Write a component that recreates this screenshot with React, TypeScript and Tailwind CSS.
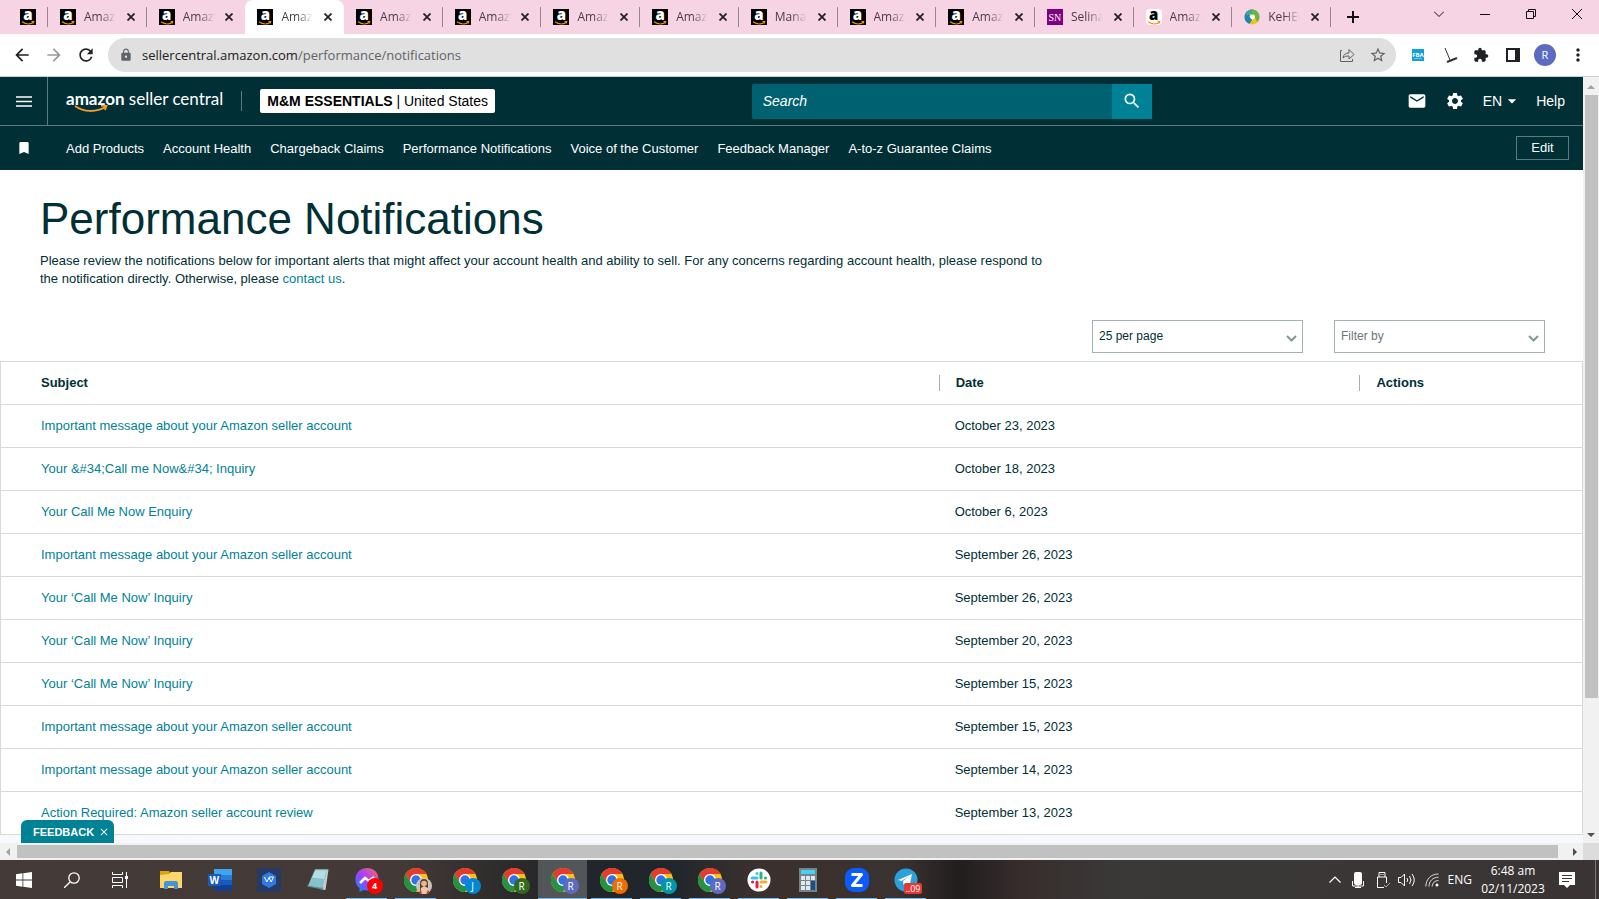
import { ReactNode } from 'react';
import { MdEmail, MdSettings, MdSearch, MdBookmark, MdArrowDropDown, MdLock, MdExtension, MdMoreVert, MdStarBorder, MdArrowBack, MdArrowForward, MdRefresh, MdClose } from 'react-icons/md';

type TabInfo = { title: string; icon: 'amazon' | 'amazonLight' | 'sn' | 'kehe'; active?: boolean };

const tabs: TabInfo[] = [
    { title: 'Amazo', icon: 'amazon' },
    { title: 'Amazo', icon: 'amazon' },
    { title: 'Amazo', icon: 'amazon', active: true },
    { title: 'Amazo', icon: 'amazon' },
    { title: 'Amazo', icon: 'amazon' },
    { title: 'Amazo', icon: 'amazon' },
    { title: 'Amazo', icon: 'amazon' },
    { title: 'Manag', icon: 'amazon' },
    { title: 'Amazo', icon: 'amazon' },
    { title: 'Amazo', icon: 'amazon' },
    { title: 'Selina', icon: 'sn' },
    { title: 'Amazo', icon: 'amazonLight' },
    { title: 'KeHEC', icon: 'kehe' },
];

const navLinks = [
    'Add Products',
    'Account Health',
    'Chargeback Claims',
    'Performance Notifications',
    'Voice of the Customer',
    'Feedback Manager',
    'A-to-z Guarantee Claims',
];

const notifications = [
    { subject: 'Important message about your Amazon seller account', date: 'October 23, 2023' },
    { subject: 'Your &#34;Call me Now&#34; Inquiry', date: 'October 18, 2023' },
    { subject: 'Your Call Me Now Enquiry', date: 'October 6, 2023' },
    { subject: 'Important message about your Amazon seller account', date: 'September 26, 2023' },
    { subject: 'Your ‘Call Me Now’ Inquiry', date: 'September 26, 2023' },
    { subject: 'Your ‘Call Me Now’ Inquiry', date: 'September 20, 2023' },
    { subject: 'Your ‘Call Me Now’ Inquiry', date: 'September 15, 2023' },
    { subject: 'Important message about your Amazon seller account', date: 'September 15, 2023' },
    { subject: 'Important message about your Amazon seller account', date: 'September 14, 2023' },
    { subject: 'Action Required: Amazon seller account review', date: 'September 13, 2023' },
];

function Favicon({ kind }: { kind: TabInfo['icon'] }) {
    if (kind === 'sn') {
        return (
            <span className="flex size-4 shrink-0 items-center justify-center bg-[#80007f] font-['Liberation_Serif',serif] text-[10px] text-white">SN</span>
        );
    }
    if (kind === 'kehe') {
        return (
            <svg className="size-4 shrink-0" viewBox="0 0 16 16">
                <circle cx="8" cy="8" r="7.500" fill="#f3c318" />
                <path fill="#67b346" d="M3 2.500C7-1.500 15.500.5 15.500 8c0 2-1 4-2.500 5-.5-3-3-6-6-7z" />
                <path fill="#1d84b5" d="M.5 8c0-3 1.500-5 3.500-6.200C5 5 7 9 8 11c-1 2-2 3.500-3 3.800C2 13.500.5 11 .5 8z" />
                <path fill="#3aa6a0" d="M2 4C3 1.500 6 .3 9 .6L7 4 3 7z" />
                <path fill="#fff" d="M5.500 7.500c1-2 3.500-2.500 5-1.500 1 1.500.5 3.500-1.500 4.500-2 0-3-1.500-3.500-3z" />
            </svg>
        );
    }
    const light = kind === 'amazonLight';
    return (
        <span className={`relative flex size-4 shrink-0 justify-center ${light ? 'rounded-sm bg-white text-black' : 'bg-black text-white'}`}>
            <span className="font-['Open_Sans',sans-serif] text-[15px] leading-[11px] font-extrabold">a</span>
            <svg className="absolute inset-x-0 bottom-0 h-1 w-4" viewBox="0 0 16 4" fill="none" stroke="#f79400" strokeWidth="1.200">
                <path d="M2 .8c4 2.800 8 2.800 11.500.4M11.500.5h2.200l-.5 1.800" />
            </svg>
        </span>
    );
}

function Tab({ tab, divider }: { tab: TabInfo; divider: boolean }) {
    return (
        <div className={`relative flex h-[34px] min-w-0 flex-1 items-center pl-3 ${tab.active ? 'rounded-t-lg bg-white' : ''}`}>
            <Favicon kind={tab.icon} />
            <span className="ml-2 w-8 overflow-hidden bg-gradient-to-r from-[#45393f] from-50% to-transparent bg-clip-text text-xs whitespace-nowrap text-transparent">{tab.title}</span>
            <button aria-label="Close tab" className="mr-2 ml-auto flex size-4 items-center justify-center text-[#222]">
                <svg className="size-2" viewBox="0 0 8 8" stroke="currentColor" strokeWidth="1.800"><path d="M.5.5l7 7M7.500.5l-7 7" /></svg>
            </button>
            {divider && <span className="absolute top-[7px] right-0 h-5 w-px bg-[#9a858e]" />}
        </div>
    );
}

function Browser() {
    return (
        <header className="shrink-0 font-['Open_Sans','Noto_Sans',sans-serif]">
            <div className="flex h-[34px] bg-[#f6d4e3]">
                <div className="relative flex w-12 shrink-0 items-center pl-5">
                    <Favicon kind="amazon" />
                    <span className="absolute top-[7px] right-0 h-5 w-px bg-[#9a858e]" />
                </div>
                <div className="flex min-w-0 flex-1">
                    {tabs.map((tab, i) => (
                        <Tab key={i} tab={tab} divider={!tab.active && !tabs[i + 1]?.active} />
                    ))}
                </div>
                <div className="flex w-[268px] shrink-0 items-center text-[#111]">
                    <button aria-label="New tab" className="ml-4"><svg className="size-3" viewBox="0 0 12 12" stroke="currentColor" strokeWidth="2"><path d="M6 0v12M0 6h12" /></svg></button>
                    <div className="ml-auto flex h-7 items-center gap-9 self-start pr-[17px]">
                        <button aria-label="Search tabs"><svg className="size-[10px]" viewBox="0 0 10 10" fill="none" stroke="currentColor"><path d="M0 2.500l5 5 5-5" /></svg></button>
                        <button aria-label="Minimize"><svg className="size-[10px]" viewBox="0 0 10 10" stroke="currentColor"><path d="M0 5.500h10" /></svg></button>
                        <button aria-label="Restore"><svg className="size-[10px]" viewBox="0 0 10 10" fill="none" stroke="currentColor"><path d="M.5 2.500h7v7h-7zM2.500 2.500v-2h7v7h-2" /></svg></button>
                        <button aria-label="Close"><svg className="size-[10px]" viewBox="0 0 10 10" stroke="currentColor"><path d="M0 0l10 10M10 0L0 10" /></svg></button>
                    </div>
                </div>
            </div>
            <div className="flex h-[43px] items-center border-b border-[#c9cfcf] bg-white text-[#1f2124]">
                <div className="flex w-[108px] shrink-0 items-center gap-3 pl-3">
                    <button aria-label="Back"><MdArrowBack className="size-5" /></button>
                    <button aria-label="Forward" className="text-[#9a9a9a]"><MdArrowForward className="size-5" /></button>
                    <button aria-label="Reload"><MdRefresh className="size-5" /></button>
                </div>
                <div className="flex h-[34px] min-w-0 flex-1 items-center rounded-full bg-[#e0e0e0] pr-[9px] pl-[11px] text-[#5f6368]">
                    <MdLock className="size-[14px]" />
                    <div className="ml-[9px] flex-1 pt-px text-[13px]"><span className="text-[#202124]">sellercentral.amazon.com</span>/performance/notifications</div>
                    <button aria-label="Share" className="mr-[14px]">
                        <svg className="size-4" viewBox="0 0 16 16" fill="none" stroke="currentColor"><path d="M3 3.500H1.500v11h12V12M4 11c.5-3.500 2.500-5 6-5V2.500l5 5-5 4.500V9C7 9 5.500 9.500 4 11z" /></svg>
                    </button>
                    <button aria-label="Bookmark"><MdStarBorder className="size-[18px]" /></button>
                </div>
                <div className="flex w-[203px] shrink-0 items-center pl-4">
                    <svg className="size-3" viewBox="0 0 12 12"><path fill="#139fda" d="M0 0h12v12H0z" /><text x="6" y="7.500" fontSize="6" fontWeight="bold" textAnchor="middle" fill="#fff">FBA</text><path d="M2 9.500h8" stroke="#8fd3f0" strokeWidth=".7" /></svg>
                    <svg className="ml-[18px] size-4" viewBox="0 0 16 16" fill="none" stroke="#333"><path d="M3 1l5 12" /><path d="M5 15l10-4" strokeWidth="2" /></svg>
                    <MdExtension className="ml-[15px] size-4" />
                    <svg className="ml-[17px] size-[14px]" viewBox="0 0 14 14"><path fill="currentColor" fillRule="evenodd" d="M0 0h14v14H0zM2 2v10h7V2z" /></svg>
                    <span className="ml-[14px] flex size-[22px] items-center justify-center rounded-full bg-[#5c6bc0] text-[11px] text-white">R</span>
                    <button aria-label="Menu" className="ml-3"><MdMoreVert className="size-5" /></button>
                </div>
            </div>
        </header>
    );
}

function SiteHeader() {
    return (
        <div className="bg-[#002f36] text-white">
            <div className="flex h-[49px] items-center border-b border-[#5b7b7f]">
                <button aria-label="Open menu" className="flex h-full w-12 shrink-0 items-center justify-center border-r border-[#5b7b7f]">
                    <svg className="h-[11px] w-4" viewBox="0 0 16 11" stroke="currentColor" strokeWidth="1.500"><path d="M0 1h16M0 5.500h16M0 10h16" /></svg>
                </button>
                <a href="#" className="relative ml-[18px] pb-1 font-['Lato','Open_Sans',sans-serif] text-[17px] leading-6 whitespace-nowrap">
                    <span className="font-bold">amazon</span> seller central
                    <svg className="absolute top-[18px] left-2 h-2 w-9" viewBox="0 0 36 8" fill="none" stroke="#f39a2d" strokeWidth="1.800"><path d="M1 1c9 6.500 21 6.500 31 .8M27 .9h5.500L31 5" /></svg>
                </a>
                <span className="ml-[18px] h-5 w-px bg-[#5b7b7f]" />
                <button className="ml-[18px] h-6 shrink-0 rounded-xs bg-white px-[7px] text-sm leading-6 whitespace-nowrap text-black">
                    <b>M&amp;M ESSENTIALS</b> | United States
                </button>
                <form className="ml-auto flex h-[35px] w-[400px]">
                    <input aria-label="Search" placeholder="Search" className="min-w-0 flex-1 rounded-l-xs bg-[#006170] px-[11px] text-sm italic outline-none placeholder:text-white" />
                    <button type="button" aria-label="Submit search" className="flex w-10 items-center justify-center bg-[#008296]"><MdSearch className="size-5" /></button>
                </form>
                <div className="ml-[255px] flex items-center pr-[18px] text-sm">
                    <a href="#" aria-label="Messages"><MdEmail className="size-5" /></a>
                    <a href="#" aria-label="Settings" className="ml-[18px]"><MdSettings className="size-5" /></a>
                    <button className="ml-[18px] flex items-center">EN<MdArrowDropDown className="size-5" /></button>
                    <a href="#" className="ml-[14px]">Help</a>
                </div>
            </div>
            <nav className="flex h-11 items-center text-[13px]">
                <MdBookmark className="mx-4 size-4" />
                <div className="ml-[18px] flex gap-[19px] pt-[2px] whitespace-nowrap">
                    {navLinks.map((link) => <a key={link} href="#">{link}</a>)}
                </div>
                <button className="mr-[14px] ml-auto h-6 w-[53px] border border-[#5b7b7f]">Edit</button>
            </nav>
        </div>
    );
}

function Dropdown({ label, text, color }: { label: string; text: string; color: string }) {
    return (
        <div className="relative w-[211px]">
            <select aria-label={label} className={`h-[33px] w-full appearance-none border border-[#a2b1b1] bg-white px-[6px] pb-[2px] text-xs ${color}`}>
                <option>{text}</option>
            </select>
            <svg className="pointer-events-none absolute top-[15px] right-[6px] h-[7px] w-[11px]" viewBox="0 0 11 7" fill="none" stroke="#879596" strokeWidth="2"><path d="M1 1l4.500 4.500L10 1" /></svg>
        </div>
    );
}

function Notifications() {
    return (
        <main className="bg-white text-[13px] text-[#002f36]">
            <div className="px-10 pt-6">
                <h1 className="text-[44px] leading-[50px]">Performance Notifications</h1>
                <p className="mt-2 max-w-[1015px] leading-[18px]">
                    Please review the notifications below for important alerts that might affect your account health and ability to sell. For any concerns regarding account health, please respond to the notification directly. Otherwise, please{' '}
                    <a href="#" className="text-[#008296]">contact us</a>.
                </p>
            </div>
            <div className="mt-8 flex justify-end gap-[31px] pr-[38px] pb-2">
                <Dropdown label="Rows per page" text="25 per page" color="text-[#002f36]" />
                <Dropdown label="Filter by" text="Filter by" color="text-[#6c7778]" />
            </div>
            <table className="w-full table-fixed border-collapse border border-[#d5dbdb] text-left">
                <thead>
                    <tr className="h-[43px] border-b border-[#d5dbdb]">
                        <th className="w-[59.300%] pl-10 font-bold">Subject</th>
                        <th className="w-[26.600%]"><div className="border-l border-[#a2b1b1] pl-4 leading-4">Date</div></th>
                        <th><div className="border-l border-[#a2b1b1] pl-4 leading-4">Actions</div></th>
                    </tr>
                </thead>
                <tbody>
                    {notifications.map((n, i) => (
                        <tr key={i} className="h-[43px] border-b border-[#d5dbdb]">
                            <td className="pl-10"><a href="#" className="text-[#008296]">{n.subject}</a></td>
                            <td className="pl-4">{n.date}</td>
                            <td />
                        </tr>
                    ))}
                </tbody>
            </table>
        </main>
    );
}

function Arrow({ d, className }: { d: string; className: string }) {
    return <svg className={`size-2 shrink-0 ${className}`} viewBox="0 0 8 8" fill="currentColor"><path d={d} /></svg>;
}

function ChromeIcon({ children }: { children?: ReactNode }) {
    return (
        <span className="relative size-6">
            <svg className="size-6" viewBox="0 0 24 24">
                <circle cx="12" cy="12" r="12" fill="#fbc116" />
                <path d="M12 6h10.400A12 12 0 0 0 1.600 6l5.200 9z" fill="#e33b2e" />
                <path d="M1.600 6A12 12 0 0 0 12 24l5.200-9L6.800 15z" fill="#229342" />
                <circle cx="12" cy="12" r="6" fill="#fff" />
                <circle cx="12" cy="12" r="4.700" fill="#2f73e8" />
            </svg>
            {children}
        </span>
    );
}

function Badge({ letter, color }: { letter: string; color: string }) {
    return <span className={`absolute -right-1 -bottom-0.5 flex size-4 items-center justify-center rounded-full text-[10px] leading-none text-white ${color}`}>{letter}</span>;
}

function TaskItem({ children, open, active, narrow, label }: { children: ReactNode; open?: boolean; active?: boolean; narrow?: boolean; label: string }) {
    return (
        <button aria-label={label} className={`relative flex shrink-0 items-center justify-center ${narrow ? 'w-12' : 'w-[49px]'} ${active ? 'bg-[#525659]' : ''}`}>
            {children}
            {open && <span className={`absolute bottom-0 h-px bg-[#76b9ed] ${active ? 'inset-x-0' : 'inset-x-1'}`} />}
        </button>
    );
}

function Taskbar() {
    return (
        <footer className="flex h-[39px] shrink-0 bg-[linear-gradient(90deg,#443b39_0%,#433a38_25%,#2c2a2b_32%,#20262b_37%,#20262b_42%,#3a302e_47%,#3b3331_56%,#221e1e_60%,#382d2d_64%,#3a3938_70%,#3a3434_100%)] font-['Open_Sans','Noto_Sans',sans-serif] text-white">
            <div className="flex">
                <TaskItem narrow label="Start"><svg className="size-4" viewBox="0 0 16 16" fill="#fff"><path d="M0 2.200l6.500-.9v6.300H0zM7.300 1.200L16 0v7.600H7.300zM0 8.400h6.500v6.300L0 13.800zM7.300 8.400H16V16l-8.700-1.200z" /></svg></TaskItem>
                <TaskItem narrow label="Search"><svg className="size-4" viewBox="0 0 16 16" fill="none" stroke="#fff" strokeWidth="1.300"><circle cx="10" cy="6" r="5.200" /><path d="M6.300 9.700L0 16" /></svg></TaskItem>
                <TaskItem narrow label="Task view"><svg className="size-4" viewBox="0 0 16 16" fill="none" stroke="#fff"><path d="M.5 0v2.500h10V0M.5 5.500h10v5H.5zM.5 16v-2.500h10V16M14.500 0v16" /><path d="M13 5.500h3" strokeWidth="3" /></svg></TaskItem>
            </div>
            <div className="ml-[2px] flex">
                <TaskItem label="File Explorer">
                    <svg className="h-[18px] w-[22px]" viewBox="0 0 22 18"><path fill="#e0a010" d="M0 0h9l1 2v3H0z" /><path fill="#ffd667" d="M0 4l9-1 2-2h11v16H0z" /><path fill="#4295d8" d="M4 18v-6q0-2 2-2h10q2 0 2 2v6h-4v-3H8v3z" /></svg>
                </TaskItem>
                <TaskItem label="Word">
                    <svg className="h-[22px] w-6" viewBox="0 0 24 22"><path fill="#41a5ee" d="M6 0h18v6H6z" /><path fill="#2b7cd3" d="M6 6h18v5H6z" /><path fill="#185abd" d="M6 11h18v5H6z" /><path fill="#103f91" d="M6 16h18v6H6z" /><rect y="5" width="13" height="12" rx="1" fill="#185abd" /><text x="1.500" y="15" fontSize="10" fontWeight="bold" fill="#fff">W</text></svg>
                </TaskItem>
                <TaskItem label="Office">
                    <svg className="size-6" viewBox="0 0 24 24"><path fill="#263a63" d="M0 0h24v24H0z" /><path fill="#2f7be5" d="M12 4l7 4v8l-7 4-7-4V8z" /><path d="M7.500 9l2.300 5L12 9.500l2.200 4.500L16.500 9H12" fill="none" stroke="#fff" /></svg>
                </TaskItem>
                <TaskItem label="Notepad">
                    <svg className="size-6" viewBox="0 0 24 24"><path fill="#c9cfcc" d="M9 1.500h13.500l-3 20.500-6-1z" /><path fill="#4f8f9e" d="M1 18.500l1-1.500 15.500 2-1 2.500z" /><path fill="#86c1cc" d="M9 1.500h12.500L16.500 20 2 17.500z" /><path fill="#b5dde2" d="M9.500 2.500h11L18 11 6 9.500z" /></svg>
                </TaskItem>
                <TaskItem label="Messenger" open>
                    <span className="relative size-6">
                        <svg className="size-6" viewBox="0 0 24 24"><defs><linearGradient id="msg" x1="0" y1="1" x2="1" y2="0"><stop stopColor="#0a8cff" /><stop offset=".5" stopColor="#a63dff" /><stop offset="1" stopColor="#ff6a60" /></linearGradient></defs><path fill="url(#msg)" d="M12 0C5 0 .500 5 .500 11.500c0 4 1.500 6.500 4 8.500v4l4-2c9 2 15-3 15-10.500S18.500 0 12 0z" /><path d="M5 15l5-5 4 3 5-4" fill="none" stroke="#fff" strokeWidth="2.500" /></svg>
                        <span className="absolute -right-1 -bottom-0.5 flex size-4 items-center justify-center rounded-full bg-[#ff0000] text-[9px] font-bold">4</span>
                    </span>
                </TaskItem>
                <TaskItem label="Chrome" open>
                    <ChromeIcon>
                        <svg className="absolute -right-1 -bottom-0.5 size-4 rounded-full" viewBox="0 0 16 16"><path fill="#c9c4ba" d="M0 0h16v16H0z" /><path fill="#613b2b" d="M4 6q0-5 4-5t4 5v7H4z" /><circle cx="8" cy="5.500" r="2.800" fill="#e9b596" /><path fill="#efc4a9" d="M5 10l3-2 4 2 1 6H4z" /><path fill="#bb3a30" d="M1 16l4-4 1 4zM10 16l2-4 3 4z" /></svg>
                    </ChromeIcon>
                </TaskItem>
                <TaskItem label="Chrome"><ChromeIcon><Badge letter="J" color="bg-[#0288d1]" /></ChromeIcon></TaskItem>
                <TaskItem label="Chrome"><ChromeIcon><Badge letter="R" color="bg-[#33691e]" /></ChromeIcon></TaskItem>
                <TaskItem label="Chrome" open active><ChromeIcon><Badge letter="R" color="bg-[#5c6bc0]" /></ChromeIcon></TaskItem>
                <TaskItem label="Chrome" open><ChromeIcon><Badge letter="R" color="bg-[#ef6c00]" /></ChromeIcon></TaskItem>
                <TaskItem label="Chrome" open><ChromeIcon><Badge letter="R" color="bg-[#0097a7]" /></ChromeIcon></TaskItem>
                <TaskItem label="Chrome" open><ChromeIcon><Badge letter="R" color="bg-[#5c6bc0]" /></ChromeIcon></TaskItem>
                <TaskItem label="Slack" open>
                    <svg className="size-6" viewBox="0 0 24 24" fill="none" strokeWidth="3" strokeLinecap="round">
                        <circle cx="12" cy="12" r="11.500" fill="#fff" />
                        <path d="M5 10h5M10 5.500v.1" stroke="#36c5f0" />
                        <path d="M14 5v5M18.500 10h.1" stroke="#2eb67d" />
                        <path d="M14 14h5M14 18.500v.1" stroke="#ecb22e" />
                        <path d="M10 14v5M5.500 14h.1" stroke="#e01e5a" />
                    </svg>
                </TaskItem>
                <TaskItem label="Calculator" open>
                    <svg className="h-6 w-[18px]" viewBox="0 0 18 24"><path fill="#77828b" d="M0 0h18v24H0z" /><path fill="#45d3f5" d="M2 2h14v4H2z" /><path fill="#e3e8ec" d="M2 8h4v4H2zM7 8h4v4H7zM12 8h4v4h-4zM2 13h4v4H2zM7 13h4v4H7zM2 18h4v4H2zM7 18h4v4H7z" /><path fill="#12508f" d="M12 13h4v9h-4z" /></svg>
                </TaskItem>
                <TaskItem label="Zoom" open>
                    <svg className="size-6" viewBox="0 0 24 24"><rect width="24" height="24" rx="9" fill="#0b5cff" /><path d="M6.500 6.500h10l-9 11h10" fill="none" stroke="#fff" strokeWidth="3" strokeLinejoin="round" /></svg>
                </TaskItem>
                <TaskItem label="Telegram" open>
                    <span className="relative size-6">
                        <svg className="size-6" viewBox="0 0 24 24"><circle cx="12" cy="12" r="11.500" fill="#2aa1da" /><path fill="#fff" d="M4 12l14-6-2.500 12-4-3-2 2-.5-4 6-5-7.500 5z" /></svg>
                        <span className="absolute -right-1 -bottom-0.5 rounded-xs bg-[#e53935] px-px text-[9px] leading-[11px]">..09</span>
                    </span>
                </TaskItem>
            </div>
            <div className="ml-auto flex items-center text-xs">
                <svg className="h-[7px] w-3" viewBox="0 0 12 7" fill="none" stroke="#fff" strokeWidth="1.200"><path d="M.5 6.500L6 1l5.500 5.500" /></svg>
                <svg className="ml-[11px] h-4 w-3" viewBox="0 0 12 16" fill="none" stroke="#fff"><rect x="2" y="0" width="8" height="13" rx="2" fill="#fff" stroke="none" /><path d="M.5 9v5h11V9M6 13v2.500M3 15.500h6" /></svg>
                <svg className="ml-3 h-4 w-[14px]" viewBox="0 0 14 16" fill="none" stroke="#fff"><path d="M3 5V.5h6V5M8 15.500H1.500V5h9v6M4.500 2.500h1M6.500 2.500h1" /><path d="M8 13l2 2 4-4" stroke="#aaa" /></svg>
                <svg className="ml-2 h-4 w-[17px]" viewBox="0 0 17 16" fill="none" stroke="#fff"><path d="M.5 5.500h2.500L6.500 2v12L3 10.500H.5zM9 6q1.500 2 0 4M11.500 4q3 4 0 8M14 2q4.500 6 0 12" /></svg>
                <svg className="ml-[10px] size-[14px]" viewBox="0 0 14 14" fill="none" stroke="#ddd"><path d="M.8 13.500C1 6 6 1 13.500 1M4 13.500C4 8 8 4.200 13.500 4.200M7.200 13.500c0-3.500 2.800-6 6.300-6" /><circle cx="12" cy="12" r="1.500" fill="#fff" stroke="none" /></svg>
                <span className="ml-[9px]">ENG</span>
                <div className="ml-[9px] w-16 text-center leading-[18px] whitespace-nowrap"><div>6:48 am</div><div>02/11/2023</div></div>
                <svg className="ml-[14px] h-4 w-4" viewBox="0 0 16 16"><path fill="#fff" d="M0 0h16v13h-5l-3 3-3-3H0z" /><path d="M3 3.500h10M3 6.500h10M3 9.500h7" stroke="#3a3434" /></svg>
                <span className="mr-[3px] ml-5 h-full w-px bg-[#777]" />
            </div>
        </footer>
    );
}

export default function App() {
    return (
        <div className="flex h-screen flex-col overflow-hidden font-['Liberation_Sans',Arial,sans-serif]">
            <Browser />
            <div className="flex min-h-0 flex-1">
                <div className="relative min-w-0 flex-1 overflow-hidden bg-[#f7f9fc]">
                    <SiteHeader />
                    <Notifications />
                    <button className="absolute bottom-0 left-[21px] flex h-[23px] items-center gap-1 rounded-t-md bg-[#008296] pt-px pr-1 pl-3 text-[11px] font-bold text-white">
                        FEEDBACK <MdClose className="size-3" />
                    </button>
                </div>
                <div className="flex w-4 shrink-0 flex-col items-center bg-[#f1f1f1] py-1 text-[#505050]">
                    <Arrow d="M0 6l4-4 4 4z" className="mt-[2px] text-[#a3a3a3]" />
                    <div className="mt-1 h-[603px] w-[13px] bg-[#c1c1c1]" />
                    <Arrow d="M0 2l4 4 4-4z" className="mt-auto" />
                </div>
            </div>
            <div className="flex h-[17px] shrink-0 bg-[#f1f1f1] text-[#505050]">
                <div className="flex flex-1 items-center">
                    <Arrow d="M6 0L2 4l4 4z" className="ml-1 text-[#a3a3a3]" />
                    <div className="mx-[5px] h-[13px] flex-1 bg-[#c1c1c1]" />
                    <Arrow d="M2 0l4 4-4 4z" className="mr-1 ml-2" />
                </div>
                <div className="w-4 bg-[#dcdcdc]" />
            </div>
            <Taskbar />
        </div>
    );
}
